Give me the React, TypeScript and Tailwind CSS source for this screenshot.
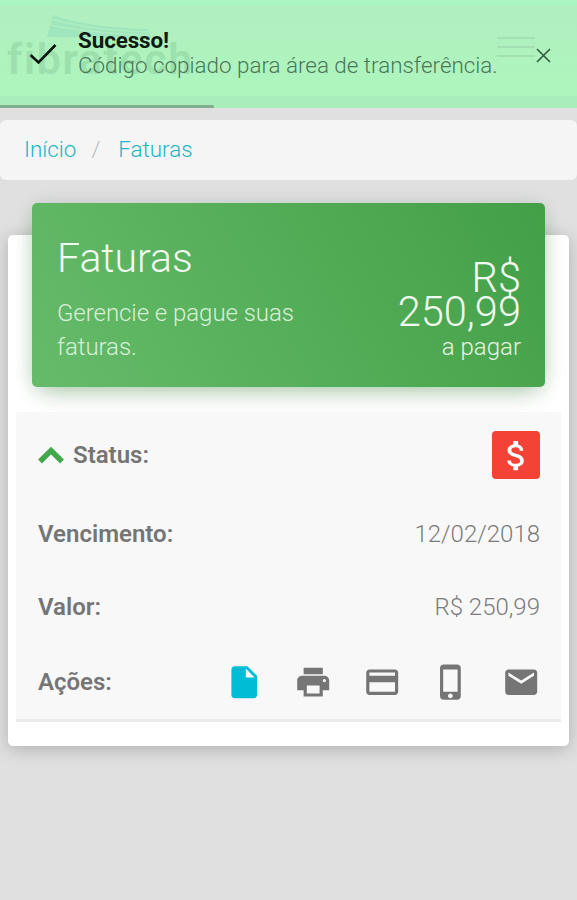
import { MdInsertDriveFile, MdPrint, MdCreditCard, MdPhoneIphone, MdEmail, MdAttachMoney } from "react-icons/md";

function Header() {
  return (
    <header className="relative h-[108px] overflow-hidden bg-[#aff3c0]">
      <div className="h-[5px] bg-[#a7f6c2]" />
      <div className="h-[91px] bg-linear-to-b from-[#b1efc1] via-[#aff2be] to-[#adf5bd]" />
      <div className="h-[12px] bg-[#a9edba]" />
      <svg className="absolute left-0 top-0" width="200" height="108" viewBox="0 0 200 108">
        <path d="M53 15 C82 25 112 28 148 29 L151 38 L47 37 Z" fill="#9fe5bd" />
        <path d="M52 19 C82 28 112 31 149 32 M50 25 C80 31 110 34 149 35" fill="none" stroke="#aeeec0" strokeWidth="1.5" />
      </svg>
      <span className="absolute left-[7px] top-[33px] text-[43px] font-semibold leading-[53px] tracking-[1.6px] text-[#9ce0ae]">fibratech</span>
      <div className="absolute left-[497px] top-[37px] flex w-[38px] flex-col gap-[7px]">
        <i className="h-[2px] bg-[#a3e1b4]" />
        <i className="h-[2px] bg-[#a3e1b4]" />
        <i className="h-[2px] bg-[#a3e1b4]" />
      </div>
      <div className="absolute inset-0 flex items-start">
        <svg className="ml-[28px] mt-[40px] shrink-0" width="30" height="27" viewBox="0 0 30 27" fill="none" stroke="#0b160e" strokeWidth="2.6">
          <path d="M2.5 15 L10.5 22.5 L27.5 5" />
        </svg>
        <div className="ml-[20px] mt-[28px] w-[420px] whitespace-nowrap text-[22.4px] leading-[25px]">
          <div className="font-bold tracking-[-0.1px] text-[#0c1a10]">Sucesso!</div>
          <div className="font-light text-[#4a7857]">Código copiado para área de transferência.</div>
        </div>
        <svg className="ml-[38px] mt-[48px]" width="15" height="15" viewBox="0 0 15 15" stroke="#315c3d" strokeWidth="1.6">
          <path d="M1 1 L14 14 M14 1 L1 14" />
        </svg>
      </div>
      <div className="absolute bottom-0 left-0 h-[3px] w-[214px] rounded-r-[2px] bg-[#7fae8d]" />
    </header>
  );
}

function Row({ label, value, height }: { label: string; value: string; height: string }) {
  return (
    <div className={"flex items-center justify-between pb-px " + height}>
      <b className="font-semibold">{label}</b>
      <span className="font-light text-[#7c7c7c]">{value}</span>
    </div>
  );
}

export default function App() {
  return (
    <div className="h-[900px] overflow-hidden bg-[#e0e0e0] font-[Roboto,sans-serif] text-[22.4px]">
      <Header />
      <nav className="mt-[12px] flex h-[60px] rounded-[6px] bg-[#f5f5f5] pl-[24px] leading-[58px] font-light text-[#22b5c4]">
        <a>Início</a>
        <span className="ml-[15px] text-[#bbb]">/</span>
        <a className="ml-[18px]">Faturas</a>
      </nav>
      <main className="mx-[8px] mt-[55px] flex h-[511px] flex-col rounded-[5px] bg-white px-[8px] shadow-[0_3px_18px_#00000038]">
        <section className="mx-[16px] -mt-[32px] flex h-[184px] shrink-0 justify-between rounded-[5px] bg-linear-[60deg] from-[#66bb6a] to-[#43a047] px-[25px] font-light text-[#f0faf0] shadow-[0_7px_24px_-8px_#4caf5070,0_12px_25px_-8px_#00000020,0_0_18px_#00000014]">
          <div className="w-[260px] pt-[31px]">
            <h1 className="text-[41px] leading-[48px]">Faturas</h1>
            <p className="mt-[14px] text-[24px] leading-[34px] tracking-[-0.05px] text-[#d8efd9]">Gerencie e pague suas faturas.</p>
          </div>
          <div className="-mr-[1px] pt-[58px] text-right">
            <div className="text-[41.6px] leading-[34px]">R$<br />250,99</div>
            <div className="mt-px text-[24px] leading-[34px] text-[#e4f4e4]">a pagar</div>
          </div>
        </section>
        <section className="mt-[25px] h-[310px] border-b-[3px] border-[#ebebeb] bg-[#f8f8f8] pl-[22px] pr-[21px] text-[24px] text-[#757575]">
          <div className="flex h-[86px] items-center">
            <svg width="26" height="18" viewBox="0 0 26 18" fill="none" stroke="#43a84b" strokeWidth="5.4">
              <path d="M2 15.5 L13 4.5 L24 15.5" />
            </svg>
            <b className="ml-[9px] font-semibold">Status:</b>
            <span className="ml-auto flex h-[48px] w-[48px] items-center justify-center rounded-[4px] bg-[#f44336] text-white">
              <MdAttachMoney size={39} />
            </span>
          </div>
          <Row label="Vencimento:" value="12/02/2018" height="h-[73px]" />
          <Row label="Valor:" value="R$ 250,99" height="h-[73px]" />
          <div className="flex h-[75px] items-center justify-between">
            <b className="font-semibold">Ações:</b>
            <div className="flex gap-[30.8px] pt-px">
              <MdInsertDriveFile size={38.4} color="#00bcd4" />
              <MdPrint size={38.4} />
              <MdCreditCard size={38.4} />
              <MdPhoneIphone size={38.4} />
              <MdEmail size={38.4} />
            </div>
          </div>
        </section>
      </main>
    </div>
  );
}
